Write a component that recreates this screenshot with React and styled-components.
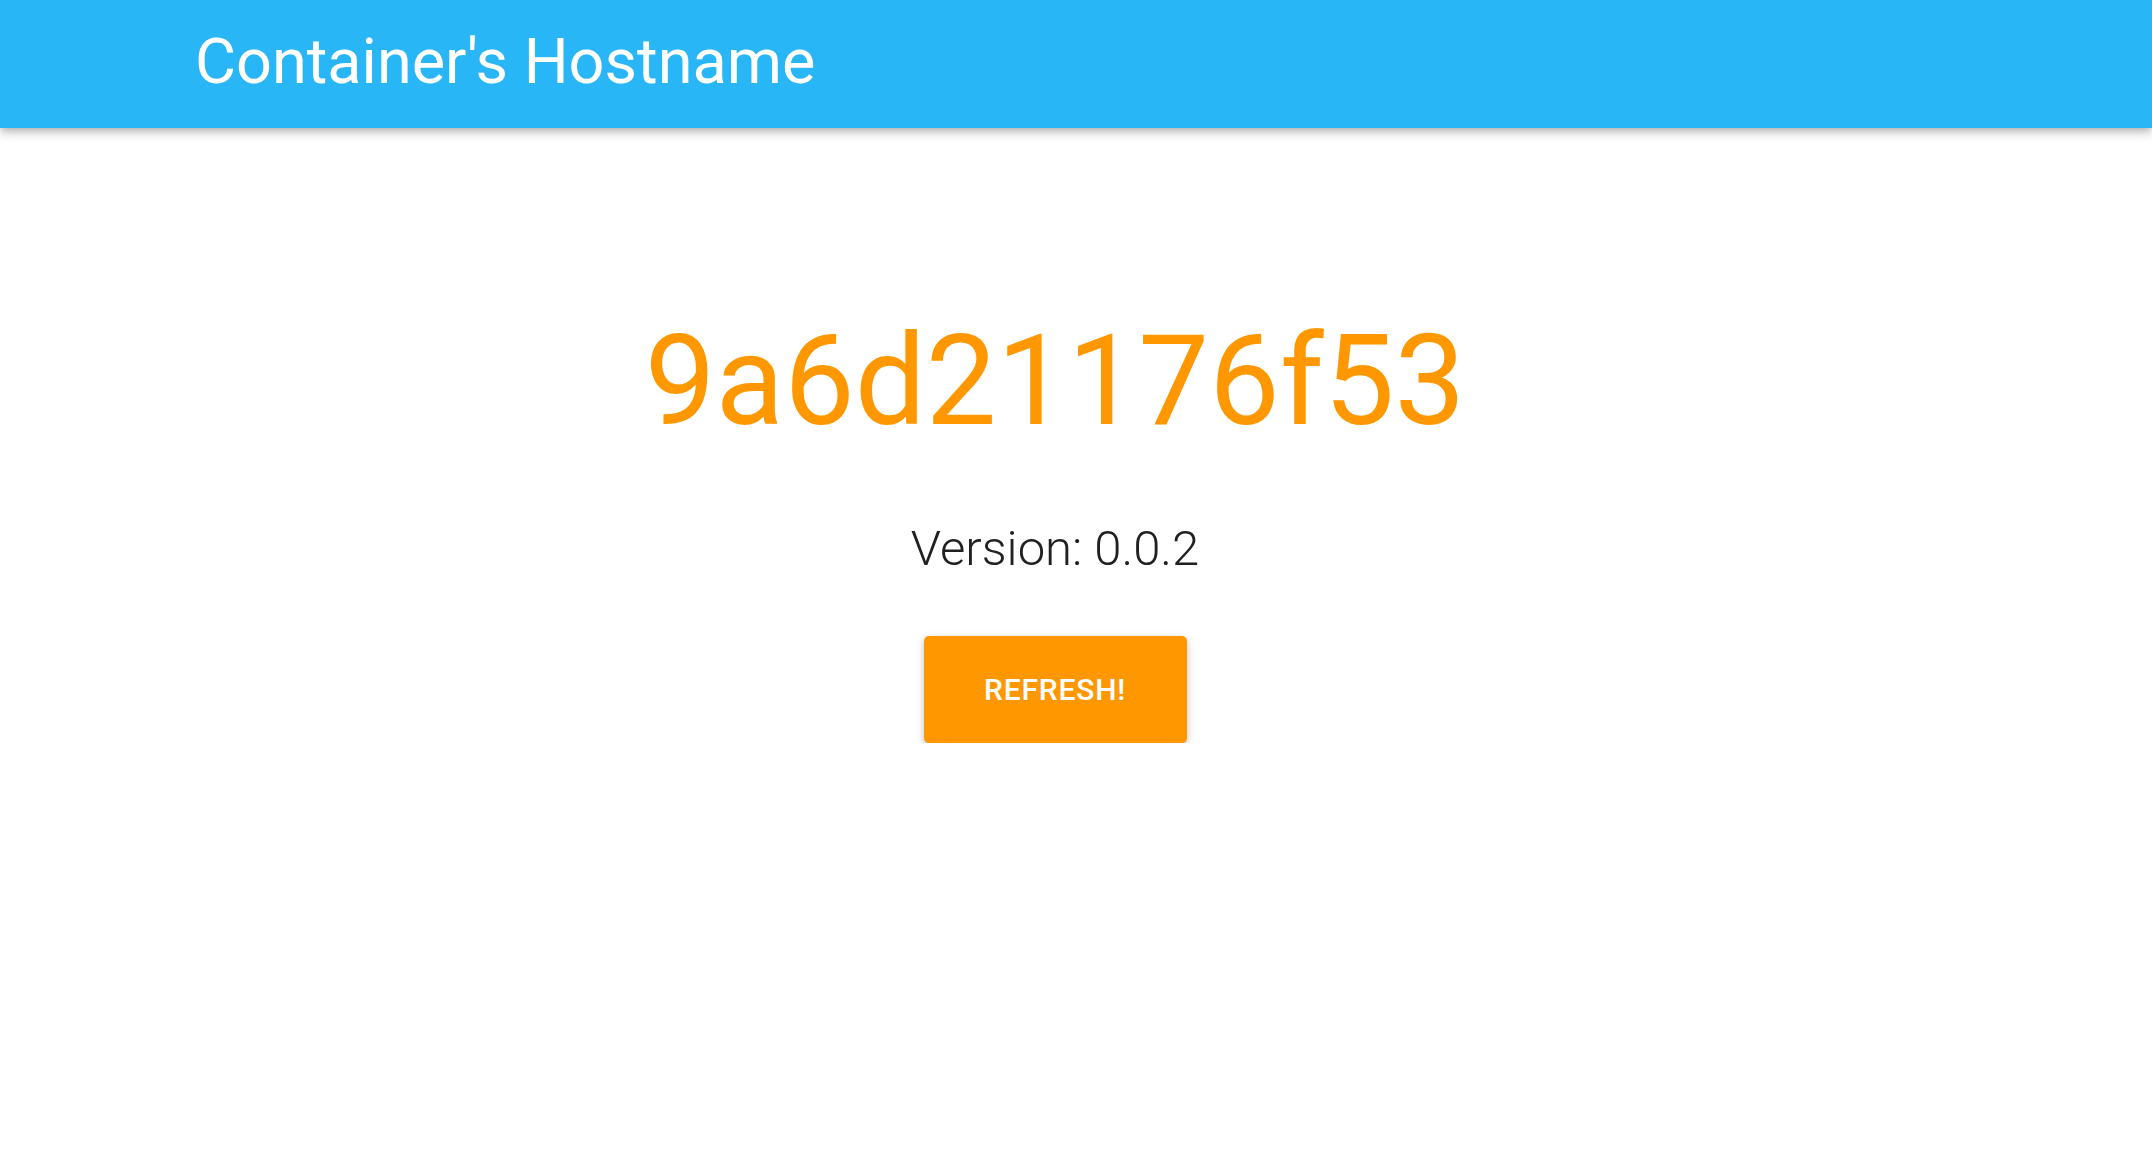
import React from 'react';
import styled, { createGlobalStyle } from 'styled-components';

const GlobalStyle = createGlobalStyle`
	html, body {
		margin: 0;
		padding: 0;
		background: #ffffff;
		font-family: Roboto, "Liberation Sans", sans-serif;
	}
`

const AppBar = styled.header`
	display: flex;
	align-items: center;
	height: 128px;
	padding: 0 0 0 195px;
	background: #29b6f6;
	box-shadow: 0 3px 6px -2px rgba(0, 0, 0, 0.18), 0 6px 8px 0 rgba(0, 0, 0, 0.12), 0 2px 16px 0 rgba(0, 0, 0, 0.1);
	position: relative;
	z-index: 1;
	h1 {
		margin: 0 0 6px 0;
		font-size: 63px;
		font-weight: 400;
		color: #ffffff;
		line-height: 1;
	}
`

const Main = styled.main`
	display: flex;
	flex-direction: column;
	align-items: center;
	padding: 190px 42px 0 0;
`

const Hostname = styled.div`
	font-size: 126px;
	font-weight: 400;
	line-height: 1;
	color: #ff9800;
`

const Version = styled.div`
	margin-top: 80px;
	font-size: 49px;
	font-weight: 300;
	line-height: 1;
	color: #212121;
`

const Button = styled.button`
	margin-top: 63px;
	width: 263px;
	height: 107px;
	border: none;
	border-radius: 5px;
	background: #ff9800;
	color: #ffffff;
	font-family: Roboto, "Liberation Sans", sans-serif;
	font-size: 30px;
	font-weight: 500;
	letter-spacing: 0.8px;
	text-transform: uppercase;
	box-shadow: 0 3px 3px -2px rgba(0, 0, 0, 0.2), 0 3px 6px 0 rgba(0, 0, 0, 0.14), 0 2px 10px 0 rgba(0, 0, 0, 0.12);
	cursor: pointer;
`

const App = () => {
	return (
		<>
			<GlobalStyle />
			<AppBar>
				<h1>Container's Hostname</h1>
			</AppBar>
			<Main>
				<Hostname>9a6d21176f53</Hostname>
				<Version>Version: 0.0.2</Version>
				<Button>Refresh!</Button>
			</Main>
		</>
	)
}

export default App
